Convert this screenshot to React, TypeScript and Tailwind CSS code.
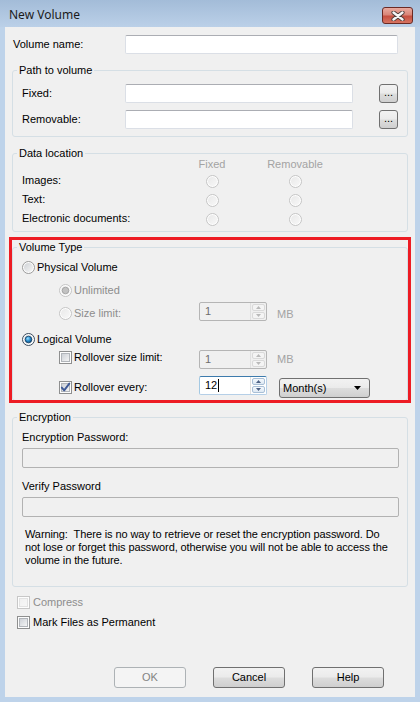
import React, { useId } from "react"

const FONT = "font-['Liberation_Sans',Arial,sans-serif]"

type RadioKind = "off" | "offDisabled" | "on" | "onDisabled"

function Radio({ kind }: { kind: RadioKind }) {
  const id = useId().replace(/:/g, "")
  const disabled = kind === "offDisabled" || kind === "onDisabled"
  const ring = kind === "on" ? "#3a4b5c" : disabled ? "#c4c4c4" : "#9a9a9a"
  const a = disabled ? "#e9e9e9" : "#cfd2d6"
  const b = disabled ? "#f7f7f7" : "#f6f6f6"
  return (
    <svg width="13" height="13" viewBox="0 0 13 13" className="shrink-0">
      <defs>
        <linearGradient id={`g${id}`} x1="0" y1="0" x2="1" y2="1">
          <stop offset="0" stopColor={a} />
          <stop offset="1" stopColor={b} />
        </linearGradient>
        <radialGradient id={`d${id}`} cx="0.4" cy="0.35" r="0.7">
          <stop offset="0" stopColor="#9ee0ff" />
          <stop offset="0.5" stopColor="#2a8fd0" />
          <stop offset="1" stopColor="#0d4a7a" />
        </radialGradient>
      </defs>
      <circle cx="6.5" cy="6.5" r="6" fill="#fdfdfd" stroke={ring} />
      <circle cx="6.5" cy="6.5" r="4.5" fill={`url(#g${id})`} />
      {kind === "on" && <circle cx="6.5" cy="6.5" r="3.3" fill={`url(#d${id})`} stroke="#123e63" strokeWidth="0.8" />}
      {kind === "onDisabled" && <circle cx="6.5" cy="6.5" r="3.3" fill="#c2c2c2" stroke="#9c9c9c" strokeWidth="0.8" />}
    </svg>
  )
}

function Check({ checked, disabled }: { checked?: boolean; disabled?: boolean }) {
  const id = useId().replace(/:/g, "")
  return (
    <svg width="13" height="13" viewBox="0 0 13 13" className="shrink-0">
      <defs>
        <linearGradient id={`c${id}`} x1="0" y1="0" x2="1" y2="1">
          <stop offset="0" stopColor={disabled ? "#f0f0f0" : "#cbcfd5"} />
          <stop offset="1" stopColor={disabled ? "#f7f7f7" : "#f6f6f6"} />
        </linearGradient>
      </defs>
      <rect x="0.5" y="0.5" width="12" height="12" fill="#fdfdfd" stroke={disabled ? "#c7c7c7" : "#8e8f8f"} />
      <rect x="2.5" y="2.5" width="8" height="8" fill={`url(#c${id})`} stroke={disabled ? "#e2e2e2" : "#b1b5ba"} />
      {checked && (
        <path d="M2.8 6.6 L5.2 9.4 L10.3 2.6" fill="none" stroke="#3f5a96" strokeWidth="1.9" strokeLinecap="round" strokeLinejoin="round" />
      )}
    </svg>
  )
}

function TextBox({ className = "", disabled }: { className?: string; disabled?: boolean }) {
  return (
    <div
      className={[
        "rounded-[2px] border",
        disabled
          ? "border-[#b2b2b2] bg-[#f0f0f0]"
          : "border-[#dbdfe6] border-t-[#abadb3] bg-white",
        className,
      ].join(" ")}
    />
  )
}

function Arrow({ up, color }: { up?: boolean; color: string }) {
  return (
    <svg width="5" height="3" viewBox="0 0 5 3">
      <path d={up ? "M0 3 L2.5 0 L5 3 Z" : "M0 0 L2.5 3 L5 0 Z"} fill={color} />
    </svg>
  )
}

function Spin({ value, disabled, focused }: { value: string; disabled?: boolean; focused?: boolean }) {
  const arrow = disabled ? "#b9b9b9" : "#4d6185"
  const half = disabled
    ? "flex flex-1 items-center justify-center rounded-[2px] border border-[#d9d9d9] bg-[#f4f4f4]"
    : "flex flex-1 items-center justify-center rounded-[2px] border border-[#a9bfd6] bg-[linear-gradient(#f5f9fd,#dde8f3)]"
  return (
    <div
      className={[
        "flex h-[19px] w-[68px] shrink-0 rounded-[2px] border",
        disabled
          ? "border-[#b5b5b5] bg-[#f0f0f0] text-[#6d6d6d]"
          : focused
            ? "border-[#b5cfe7] border-t-[#3d7bad] border-l-[#a4c9e3] bg-white text-black"
            : "border-[#dbdfe6] border-t-[#abadb3] bg-white",
      ].join(" ")}
    >
      <div className="flex flex-1 items-center pl-[5px] leading-[13px]">
        {value}
        {focused && <span className="ml-px h-[13px] w-px bg-black" />}
      </div>
      <div className="flex w-[16px] flex-col gap-px border-l border-[#e0e0e0] p-px">
        <div className={half}>
          <Arrow up color={arrow} />
        </div>
        <div className={half}>
          <Arrow color={arrow} />
        </div>
      </div>
    </div>
  )
}

// shared Win7 push-button skin (alignment set per use)
const SKIN =
  "rounded-[3px] border border-[#707070] bg-[linear-gradient(#f2f2f2,#ebebeb_48%,#dddddd_52%,#cfcfcf)] text-black"

export default function App() {
  return (
    <div className={`flex h-[702px] w-[420px] flex-col bg-[#bed3ea] text-[11px] leading-[13px] text-black ${FONT}`}>
      {/* title bar */}
      <div className="flex h-[27px] shrink-0 items-start justify-between bg-[linear-gradient(#a3bcd8,#bbd0e8)] pl-[9px] pr-[7px]">
        <span className="mt-[7px] font-['Noto_Sans',sans-serif] text-[12px] leading-[16px] text-[#1b1b1b]">New Volume</span>
        <div className="mt-[7px] flex h-[17px] w-[31px] items-center justify-center rounded-[3px] border border-[#6b2a24] bg-[linear-gradient(#e9aa9f,#d98578_45%,#c64f40_55%,#d77462)]">
          <svg width="14" height="10" viewBox="0 0 14 10">
            <path d="M2.5 1.5 L11.5 8.5 M11.5 1.5 L2.5 8.5" stroke="#4b3b39" strokeWidth="4.2" strokeLinecap="round" />
            <path d="M2.5 1.5 L11.5 8.5 M11.5 1.5 L2.5 8.5" stroke="#f6f6f6" strokeWidth="2.4" strokeLinecap="round" />
          </svg>
        </div>
      </div>

      {/* client area */}
      <div className="relative mx-[5px] mb-[5px] flex flex-1 flex-col bg-[#f0f0f0]">
        <div className="mt-[8px] flex items-center pl-[8px]">
          <span className="w-[112px]">Volume name:</span>
          <TextBox className="h-[19px] w-[273px]" />
        </div>

        {/* Path to volume */}
        <fieldset className="mx-[7px] mt-[10px] rounded-[3px] border border-[#d5dfe5] p-0">
          <legend className="ml-[4px] px-[2px] leading-[13px]">Path to volume</legend>
          <div className="flex flex-col gap-[7px] px-[9px] pb-[7px] pt-[7px]">
            {["Fixed:", "Removable:"].map((l) => (
              <div key={l} className="flex items-center">
                <span className="w-[103px]">{l}</span>
                <TextBox className="h-[19px] w-[228px]" />
                <div className={`${SKIN} ml-[26px] flex h-[19px] w-[19px] items-end justify-center pb-[4px] leading-none`}>...</div>
              </div>
            ))}
          </div>
        </fieldset>

        {/* Data location */}
        <fieldset className="mx-[7px] mt-[10px] rounded-[3px] border border-[#d5dfe5] p-0">
          <legend className="ml-[4px] px-[2px] leading-[13px]">Data location</legend>
          <div className="px-[9px] pb-[3px]">
            <div className="-mt-[2px] flex h-[12px] items-center text-[#a3a3a3]">
              <span className="w-[160px]" />
              <span className="flex w-[60px] justify-center">Fixed</span>
              <span className="ml-[23px] flex w-[60px] justify-center">Removable</span>
            </div>
            {[
              { l: "Images:", h: "h-[20px]" },
              { l: "Text:", h: "h-[19px]" },
              { l: "Electronic documents:", h: "h-[19px]" },
            ].map((r) => (
              <div key={r.l} className={`flex items-center ${r.h}`}>
                <span className="w-[160px]">{r.l}</span>
                <span className="flex w-[60px] justify-center pt-[2px]">
                  <Radio kind="offDisabled" />
                </span>
                <span className="ml-[23px] flex w-[60px] justify-center pt-[2px]">
                  <Radio kind="offDisabled" />
                </span>
              </div>
            ))}
          </div>
        </fieldset>

        {/* Volume Type */}
        <fieldset className="mx-[7px] mt-[9px] rounded-[3px] border border-[#d5dfe5] p-0">
          <legend className="ml-[4px] px-[2px] leading-[13px]">Volume Type</legend>
          <div className="px-[9px] pb-[2px] pt-[4px]">
            <div className="flex h-[18px] items-center gap-[2px]">
              <Radio kind="off" />
              <span>Physical Volume</span>
            </div>
            <div className="mt-[5px] flex h-[18px] items-center gap-[2px] pl-[37px] text-[#8d8d8d]">
              <Radio kind="onDisabled" />
              <span>Unlimited</span>
            </div>
            <div className="mt-[3px] flex items-start pl-[37px]">
              <div className="mt-[5px] flex h-[13px] w-[140px] items-center gap-[2px] text-[#8d8d8d]">
                <Radio kind="offDisabled" />
                <span>Size limit:</span>
              </div>
              <Spin value="1" disabled />
              <span className="ml-[10px] mt-[6px] text-[#a3a3a3]">MB</span>
            </div>
            <div className="mt-[9px] flex h-[18px] items-center gap-[2px]">
              <Radio kind="on" />
              <span>Logical Volume</span>
            </div>
            <div className="mt-[2px] flex items-start pl-[37px]">
              <div className="mt-[1px] flex h-[13px] w-[140px] items-center gap-[2px]">
                <Check />
                <span>Rollover size limit:</span>
              </div>
              <Spin value="1" disabled />
              <span className="ml-[10px] mt-[3px] text-[#a3a3a3]">MB</span>
            </div>
            <div className="mt-[7px] flex items-start pl-[37px]">
              <div className="mt-[5px] flex h-[13px] w-[140px] items-center gap-[2px]">
                <Check checked />
                <span>Rollover every:</span>
              </div>
              <Spin value="12" focused />
              <div className={`${SKIN} ml-[12px] mt-[2px] flex h-[20px] w-[91px] items-center justify-between pl-[3px] pr-[8px]`}>
                <span>Month(s)</span>
                <svg width="7" height="4" viewBox="0 0 7 4">
                  <path d="M0 0 L7 0 L3.5 4 Z" fill="#000" />
                </svg>
              </div>
            </div>
          </div>
        </fieldset>

        {/* Encryption */}
        <fieldset className="mx-[7px] mt-[10px] rounded-[3px] border border-[#d5dfe5] p-0">
          <legend className="ml-[4px] px-[2px] leading-[13px]">Encryption</legend>
          <div className="flex flex-col pb-[19px] pl-[9px] pr-[8px]">
            <span className="mt-[7px]">Encryption Password:</span>
            <TextBox disabled className="mt-[4px] h-[20px]" />
            <span className="mt-[12px]">Verify Password</span>
            <TextBox disabled className="mt-[4px] h-[20px]" />
            <p className="mt-[11px] whitespace-nowrap pl-[3px] tracking-[-0.1px]">
              Warning:&nbsp; There is no way to retrieve or reset the encryption password. Do
              <br />
              not lose or forget this password, otherwise you will not be able to access the
              <br />
              volume in the future.
            </p>
          </div>
        </fieldset>

        <div className="mt-[9px] flex h-[13px] items-center gap-[3px] pl-[12px] text-[#8d8d8d]">
          <Check disabled />
          <span>Compress</span>
        </div>
        <div className="mt-[7px] flex h-[13px] items-center gap-[3px] pl-[12px]">
          <Check />
          <span>Mark Files as Permanent</span>
        </div>

        <div className="mt-[38px] flex justify-end gap-[27px] pr-[31px]">
          <div className="flex h-[21px] w-[72px] items-center justify-center rounded-[3px] border border-[#adb2b5] bg-[#f4f4f4] text-[#838383]">
            OK
          </div>
          <div className={`${SKIN} flex h-[21px] w-[72px] items-center justify-center`}>Cancel</div>
          <div className={`${SKIN} flex h-[21px] w-[72px] items-center justify-center`}>Help</div>
        </div>

        {/* annotation frame */}
        <div className="pointer-events-none absolute left-[4px] top-[210px] h-[166px] w-[402px] border-[3px] border-[#ed1c24]" />
      </div>
    </div>
  )
}
